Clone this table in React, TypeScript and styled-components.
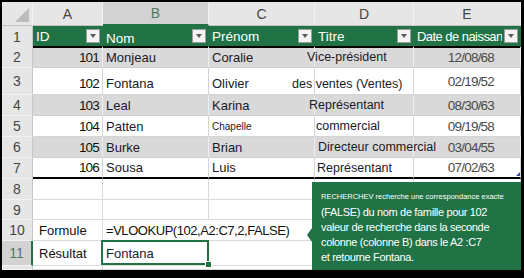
import { FC } from 'react'
import styled, { createGlobalStyle, css } from 'styled-components'

const GREEN = '#217346'
const COLS = '31px 70px 106px 106px 99px 107px'

type Band = 'head' | 'gray' | 'white' | 'plain'

interface Employee {
  id: number
  nom: string
  prenom: string
  smallPrenom?: boolean
  titre: string
  shift: number
  date: string
  height: number
  band: Band
}

const employees: Employee[] = [
  { id: 101, nom: 'Monjeau', prenom: 'Coralie', titre: 'Vice-président', shift: -8, date: '12/08/68', height: 21, band: 'gray' },
  { id: 102, nom: 'Fontana', prenom: 'Olivier', titre: 'des ventes (Ventes)', shift: -23, date: '02/19/52', height: 27, band: 'white' },
  { id: 103, nom: 'Leal', prenom: 'Karina', titre: 'Représentant', shift: -6, date: '08/30/63', height: 21, band: 'gray' },
  { id: 104, nom: 'Patten', prenom: 'Chapelle', smallPrenom: true, titre: 'commercial', shift: 1, date: '09/19/58', height: 21, band: 'white' },
  { id: 105, nom: 'Burke', prenom: 'Brian', titre: 'Directeur commercial', shift: 3, date: '03/04/55', height: 21, band: 'gray' },
  { id: 106, nom: 'Sousa', prenom: 'Luis', titre: 'Représentant', shift: 2, date: '07/02/63', height: 21, band: 'white' }
]

const headers = [
  { label: 'ID' },
  { label: 'Nom', low: true },
  { label: 'Prénom' },
  { label: 'Titre' },
  { label: 'Date de naissance', tight: true }
]

const GlobalStyle = createGlobalStyle`
  html, body {
    margin: 0;
    padding: 0;
    background: #000;
  }
  body {
    font-family: 'Liberation Sans', Arial, sans-serif;
  }
`

const Frame = styled.div`
  width: 524px;
  height: 278px;
  box-sizing: border-box;
  padding: 2px 3px 8px 2px;
  background: #000;
`

const Sheet = styled.div`
  position: relative;
  width: 519px;
  height: 268px;
  background: #fff;
  overflow: hidden;
  font-family: 'Liberation Sans', Arial, sans-serif;
  font-size: 13px;
  color: #111;
`

const bandBg: Record<Band, string> = {
  head: GREEN,
  gray: '#d9d9d9',
  white: '#fff',
  plain: '#fff'
}

const bandLine: Record<Band, string> = {
  head: GREEN,
  gray: '#eeeeee',
  white: '#d4d4d4',
  plain: '#dadada'
}

const Row = styled.div<{ $h: number; $band: Band; $rule?: boolean }>`
  display: grid;
  grid-template-columns: ${COLS};
  height: ${p => p.$h}px;
  background: ${p => bandBg[p.$band]};
  & > * {
    box-sizing: border-box;
    min-width: 0;
  }
  & > *:not(:first-child) {
    border-right: 1px solid ${p => bandLine[p.$band]};
    border-bottom: ${p => (p.$rule ? '2px solid #000' : `1px solid ${p.$band === 'gray' ? '#d0d0d0' : bandLine[p.$band]}`)};
  }
`

const ColumnHeadRow = styled.div`
  display: grid;
  grid-template-columns: ${COLS};
  height: 24px;
  background: #e6e6e6;
`

const Corner = styled.div`
  display: flex;
  align-items: flex-end;
  justify-content: flex-end;
  padding: 0 3px 3px 0;
  border-right: 1px solid #f3f3f3;
  border-bottom: 1px solid #c4c4c4;
`

const ColumnHead = styled.div<{ $selected?: boolean }>`
  display: flex;
  align-items: center;
  justify-content: center;
  box-sizing: border-box;
  font-size: 14px;
  color: #454545;
  border-right: 1px solid #f3f3f3;
  border-bottom: 1px solid #c4c4c4;
  ${p =>
    p.$selected &&
    css`
      background: #d2d2d2;
      color: #4f7a5c;
      border-bottom: 2px solid ${GREEN};
    `}
`

const RowHead = styled.div<{ $selected?: boolean; $top?: boolean }>`
  display: flex;
  align-items: ${p => (p.$top ? 'flex-start' : 'center')};
  justify-content: center;
  padding-top: ${p => (p.$top ? 2 : 0)}px;
  background: #e6e6e6;
  font-size: 14px;
  color: #454545;
  border-right: 1px solid #c6c6c6;
  border-bottom: 1px solid #f3f3f3;
  overflow: hidden;
  ${p =>
    p.$selected &&
    css`
      background: #d2d2d2;
      color: #4f7a5c;
      border-right: 2px solid ${GREEN};
    `}
`

const HeaderCell = styled.div`
  display: flex;
  align-items: center;
  gap: 2px;
  padding: 0 2px 0 3px;
  color: #fff;
  font-size: 13.5px;
`

const HeaderLabel = styled.span<{ $low?: boolean; $tight?: boolean }>`
  flex: 1;
  min-width: 0;
  overflow: hidden;
  white-space: nowrap;
  padding-top: ${p => (p.$low ? 5 : 0)}px;
  font-size: ${p => (p.$tight ? '13px' : 'inherit')};
  letter-spacing: ${p => (p.$tight ? '-0.55px' : '0')};
`

const FilterButton = styled.span`
  flex: none;
  width: 14px;
  height: 14px;
  box-sizing: border-box;
  display: flex;
  align-items: center;
  justify-content: center;
  background: #f4f4f4;
  border: 1px solid #9c9c9c;
  &::after {
    content: '';
    border-left: 3.5px solid transparent;
    border-right: 3.5px solid transparent;
    border-top: 4px solid #5a5a5a;
  }
`

const Cell = styled.div<{ $align?: 'left' | 'right'; $valign?: 'center' | 'end'; $span?: number; $flush?: boolean }>`
  display: flex;
  align-items: ${p => (p.$valign === 'end' ? 'flex-end' : 'center')};
  justify-content: ${p => (p.$align === 'right' ? 'flex-end' : 'flex-start')};
  padding: ${p => (p.$valign === 'end' ? '0 3px 3px 3px' : '0 3px')};
  ${p => p.$flush && 'padding-left: 0;'}
  white-space: nowrap;
  ${p => p.$span && `grid-column: span ${p.$span};`}
`

const NumberText = styled.span`
  font-size: 13.5px;
  letter-spacing: -0.8px;
`

const NameText = styled.span<{ $small?: boolean }>`
  font-size: ${p => (p.$small ? 10 : 13)}px;
  color: #1a1a2a;
`

const TitleText = styled.span<{ $shift: number }>`
  font-size: 12.5px;
  color: #1a1a2a;
  margin-left: ${p => p.$shift}px;
`

const DateCell = styled(Cell)<{ $corner?: boolean }>`
  position: relative;
  padding-right: 26px;
`

const DateText = styled.span`
  font-size: 13.5px;
  letter-spacing: -0.8px;
  color: #4a4a4a;
`

const LabelText = styled.span`
  padding-left: 3px;
  color: #111;
`

const FormulaText = styled.span`
  letter-spacing: -0.45px;
  color: #111;
`

const SelectedCell = styled(Cell)`
  position: relative;
  z-index: 1;
  overflow: visible;
  &::after {
    content: '';
    position: absolute;
    left: -2px;
    top: -1px;
    right: -1px;
    bottom: 0;
    border: 2px solid ${GREEN};
  }
  &::before {
    content: '';
    position: absolute;
    right: -4px;
    bottom: -3px;
    width: 5px;
    height: 5px;
    background: ${GREEN};
    border: 1px solid #fff;
    z-index: 2;
  }
`

const TableHandle = styled.span`
  position: absolute;
  right: 0;
  bottom: 1px;
  width: 0;
  height: 0;
  border-left: 4px solid transparent;
  border-bottom: 4px solid #2f4f9a;
`

const Callout = styled.div`
  position: absolute;
  left: 310px;
  top: 180px;
  width: 209px;
  bottom: 0;
  box-sizing: border-box;
  padding: 8px 6px 0 9px;
  background: ${GREEN};
  color: #fff;
  z-index: 3;
  &::before {
    content: '';
    position: absolute;
    left: -5px;
    top: 46px;
    border-top: 7px solid transparent;
    border-bottom: 7px solid transparent;
    border-right: 5px solid ${GREEN};
  }
`

const CalloutLead = styled.div`
  font-size: 7.5px;
  line-height: 13px;
  margin-bottom: 2px;
  white-space: nowrap;
`

const CalloutLine = styled.div`
  font-size: 11px;
  line-height: 15px;
  letter-spacing: -0.35px;
  white-space: nowrap;
`

const CornerMark: FC = () => (
  <svg width="14" height="14" viewBox="0 0 14 14">
    <polygon points="14,0 14,14 0,14" fill="#bcbcbc" />
  </svg>
)

const EmptyCells: FC<{ count: number }> = ({ count }) => (
  <>
    {Array.from({ length: count }, (_, i) => (
      <Cell key={i} />
    ))}
  </>
)

const App: FC = () => {
  return (
    <>
      <GlobalStyle />
      <Frame>
        <Sheet>
          <ColumnHeadRow>
            <Corner>
              <CornerMark />
            </Corner>
            {['A', 'B', 'C', 'D', 'E'].map(c => (
              <ColumnHead key={c} $selected={c === 'B'}>
                {c}
              </ColumnHead>
            ))}
          </ColumnHeadRow>

          <Row $h={21} $band="head" $rule>
            <RowHead>1</RowHead>
            {headers.map(h => (
              <HeaderCell key={h.label}>
                <HeaderLabel $low={h.low} $tight={h.tight}>
                  {h.label}
                </HeaderLabel>
                <FilterButton />
              </HeaderCell>
            ))}
          </Row>

          {employees.map((e, i) => {
            const valign = e.height > 21 ? 'end' : 'center'
            const last = i === employees.length - 1
            return (
              <Row key={e.id} $h={e.height} $band={e.band} $rule={last}>
                <RowHead>{i + 2}</RowHead>
                <Cell $align="right" $valign={valign}>
                  <NumberText>{e.id}</NumberText>
                </Cell>
                <Cell $valign={valign}>
                  <NameText>{e.nom}</NameText>
                </Cell>
                <Cell $valign={valign}>
                  <NameText $small={e.smallPrenom}>{e.prenom}</NameText>
                </Cell>
                <Cell $valign={valign} $flush>
                  <TitleText $shift={e.shift}>{e.titre}</TitleText>
                </Cell>
                <DateCell $align="right">
                  <DateText>{e.date}</DateText>
                  {last && <TableHandle />}
                </DateCell>
              </Row>
            )
          })}

          <Row $h={21} $band="plain">
            <RowHead>8</RowHead>
            <EmptyCells count={5} />
          </Row>
          <Row $h={20} $band="plain">
            <RowHead>9</RowHead>
            <EmptyCells count={5} />
          </Row>
          <Row $h={21} $band="plain">
            <RowHead>10</RowHead>
            <Cell>
              <LabelText>Formule</LabelText>
            </Cell>
            <Cell $span={2}>
              <FormulaText>=VLOOKUP(102,A2:C7,2,FALSE)</FormulaText>
            </Cell>
            <EmptyCells count={2} />
          </Row>
          <Row $h={25} $band="plain">
            <RowHead $selected>11</RowHead>
            <Cell>
              <LabelText>Résultat</LabelText>
            </Cell>
            <SelectedCell>
              <NameText>Fontana</NameText>
            </SelectedCell>
            <EmptyCells count={3} />
          </Row>
          <Row $h={4} $band="plain">
            <RowHead $top>12</RowHead>
            <EmptyCells count={5} />
          </Row>

          <Callout>
            <CalloutLead>RECHERCHEV recherche une correspondance exacte</CalloutLead>
            <CalloutLine>(FALSE) du nom de famille pour 102</CalloutLine>
            <CalloutLine>valeur de recherche dans la seconde</CalloutLine>
            <CalloutLine>colonne (colonne B) dans le A2 :C7</CalloutLine>
            <CalloutLine>et retourne Fontana.</CalloutLine>
          </Callout>
        </Sheet>
      </Frame>
    </>
  )
}

export default App
